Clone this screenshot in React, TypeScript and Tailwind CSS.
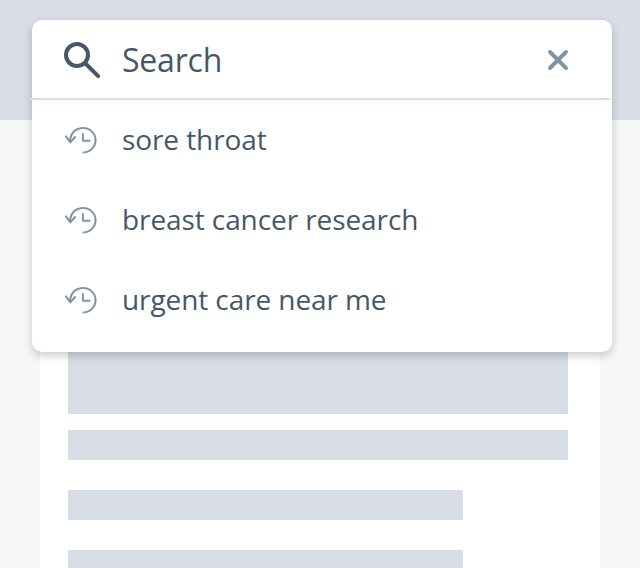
const recentSearches = ['sore throat', 'breast cancer research', 'urgent care near me'];

function SearchIcon() {
  return (
    <svg className="size-10 shrink-0" viewBox="0 0 40 40" fill="none" stroke="#465867">
      <circle cx="15" cy="15" r="11" strokeWidth="4" />
      <path d="M23.5 23.5 36.2 36.2" strokeWidth="4" strokeLinecap="round" />
    </svg>
  );
}

function CloseIcon() {
  return (
    <svg className="size-6" viewBox="0 0 24 24" fill="none" stroke="#7f95a5" strokeWidth="4" strokeLinecap="round">
      <path d="M4 4 20 20M20 4 4 20" />
    </svg>
  );
}

function HistoryIcon() {
  return (
    <svg
      className="h-8 w-9 shrink-0"
      viewBox="0 0 36 32"
      fill="none"
      stroke="#7f95a5"
      strokeWidth="2"
      strokeLinecap="round"
      strokeLinejoin="round"
    >
      <path d="M8.4 17.5C7.6 9.5 13.7 3.9 21.1 3.9A12.2 12.2 0 0 1 21.5 28.4" />
      <path d="M4 12.4 8.4 18.4 13 13" />
      <path d="M20.9 9.9V16.8H27.6" />
    </svg>
  );
}

export default function App() {
  return (
    <div className="relative h-[568px] w-[640px] overflow-hidden bg-[#f5f7f9] font-['Open_Sans',sans-serif] text-[#465867] antialiased">
      <div className="h-[120px] bg-[#d8dde6]" />
      <div className="mx-10 flex h-[448px] flex-col bg-white pl-7 pt-[194px]">
        <div className="h-[100px] w-[500px] shrink-0 bg-[#d8dde6]" />
        <div className="mt-4 h-[30px] w-[500px] shrink-0 bg-[#d8dde6]" />
        <div className="mt-[30px] h-[30px] w-[395px] shrink-0 bg-[#d8dde6]" />
        <div className="mt-[30px] h-[18px] w-[395px] shrink-0 bg-[#d8dde6]" />
      </div>

      <div className="absolute left-8 top-5 h-[332px] w-[580px] rounded-[10px] bg-white shadow-[0_4px_10px_rgba(0,0,0,0.2)]">
        <div className="-ml-0.5 flex h-20 w-[580px] items-center border-b-2 border-[#d8dde6] pl-8 pr-10 pt-0.5 shadow-[0_8px_8px_-6px_rgba(0,0,0,0.05)]">
          <SearchIcon />
          <span className="ml-5 flex-1 text-[32px] leading-10 tracking-[-0.2px]">Search</span>
          <button aria-label="Close" className="flex">
            <CloseIcon />
          </button>
        </div>
        <ul>
          {recentSearches.map((term) => (
            <li key={term} className="flex h-20 items-center pl-[30px] text-[28px] leading-10 tracking-[-0.09px]">
              <HistoryIcon />
              <span className="mb-0.5 ml-6">{term}</span>
            </li>
          ))}
        </ul>
      </div>
    </div>
  );
}
